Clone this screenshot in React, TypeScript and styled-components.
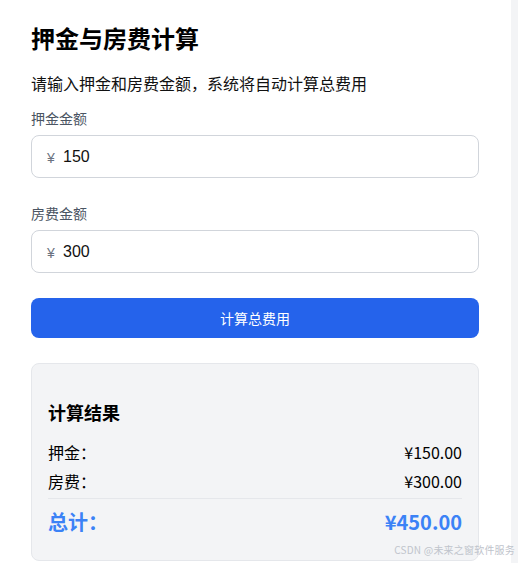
import React, { useState } from "react";
import styled, { createGlobalStyle } from "styled-components";

const Global = createGlobalStyle`
  html, body { margin: 0; padding: 0; background: #ffffff; }
  body { font-family: "Microsoft YaHei", "Noto Sans CJK SC", "Liberation Sans", sans-serif; color: #000; }
`;

const Page = styled.div`
  display: flex;
  width: 518px;
  height: 563px;
  overflow: hidden;
  position: relative;
`;

const Main = styled.main`
  width: 511px;
  padding: 22px 0 0 31px;
  box-sizing: border-box;
`;

const Strip = styled.div`
  width: 7px;
  background: #f3f4f6;
`;

const Container = styled.div`
  width: 448px;
`;

const Title = styled.h1`
  margin: 0;
  font-size: 24px;
  line-height: 32px;
  font-weight: 700;
  color: #000;
`;

const Subtitle = styled.p`
  margin: 17px 0 13px;
  font-size: 16px;
  line-height: 24px;
  color: #111;
`;

const Field = styled.div`
  margin-bottom: 25px;
`;

const Label = styled.label`
  display: block;
  font-size: 14px;
  line-height: 20px;
  color: #4b5563;
  margin-bottom: 7px;
`;

const InputBox = styled.div`
  display: flex;
  align-items: center;
  height: 43px;
  box-sizing: border-box;
  border: 1px solid #d1d5db;
  border-radius: 8px;
  padding: 0 15px;
  background: #fff;
`;

const Currency = styled.span`
  font-family: "Liberation Sans", Arial, sans-serif;
  font-size: 14px;
  color: #6b7280;
  width: 16px;
  margin-top: 2px;
`;

const Input = styled.input`
  border: none;
  outline: none;
  flex: 1;
  font-family: "Liberation Sans", Arial, sans-serif;
  font-size: 16px;
  color: #111;
  padding: 0;
  background: transparent;
`;

const Button = styled.button`
  display: block;
  width: 100%;
  height: 40px;
  border: none;
  border-radius: 8px;
  background: #2563eb;
  color: #fff;
  font-family: inherit;
  font-size: 14px;
  cursor: pointer;
  margin-bottom: 25px;
`;

const ResultBox = styled.section`
  background: #f3f4f6;
  border: 1px solid #e5e7eb;
  border-radius: 8px;
  padding: 34px 16px 21px;
  box-sizing: border-box;
  height: 198px;
`;

const ResultTitle = styled.h3`
  margin: 0 0 14px;
  font-size: 18px;
  line-height: 28px;
  font-weight: 700;
`;

const Row = styled.div<{ $total?: boolean }>`
  display: flex;
  justify-content: space-between;
  align-items: center;
  font-size: ${(p) => (p.$total ? "20px" : "16px")};
  line-height: ${(p) => (p.$total ? "28px" : "24px")};
  font-weight: ${(p) => (p.$total ? 700 : 400)};
  color: ${(p) => (p.$total ? "#3b82f6" : "#000")};
  margin-bottom: ${(p) => (p.$total ? "0" : "5px")};
`;

const Divider = styled.hr`
  border: none;
  border-top: 1px solid #e5e7eb;
  margin: 3px 0 9px;
`;

const Watermark = styled.div`
  position: absolute;
  right: 3px;
  bottom: 6px;
  font-size: 10px;
  color: #c0c4cc;
  letter-spacing: 0.2px;
`;

export default function App() {
  const [deposit, setDeposit] = useState("150");
  const [rent, setRent] = useState("300");
  const d = parseFloat(deposit) || 0;
  const r = parseFloat(rent) || 0;
  return (
    <Page>
      <Global />
      <Main>
        <Container>
          <Title>押金与房费计算</Title>
          <Subtitle>请输入押金和房费金额，系统将自动计算总费用</Subtitle>
          <Field>
            <Label>押金金额</Label>
            <InputBox>
              <Currency>¥</Currency>
              <Input value={deposit} onChange={(e) => setDeposit(e.target.value)} />
            </InputBox>
          </Field>
          <Field>
            <Label>房费金额</Label>
            <InputBox>
              <Currency>¥</Currency>
              <Input value={rent} onChange={(e) => setRent(e.target.value)} />
            </InputBox>
          </Field>
          <Button>计算总费用</Button>
          <ResultBox>
            <ResultTitle>计算结果</ResultTitle>
            <Row>
              <span>押金：</span>
              <span>¥{d.toFixed(2)}</span>
            </Row>
            <Row>
              <span>房费：</span>
              <span>¥{r.toFixed(2)}</span>
            </Row>
            <Divider />
            <Row $total>
              <span>总计：</span>
              <span>¥{(d + r).toFixed(2)}</span>
            </Row>
          </ResultBox>
        </Container>
      </Main>
      <Strip />
      <Watermark>CSDN @未来之窗软件服务</Watermark>
    </Page>
  );
}
